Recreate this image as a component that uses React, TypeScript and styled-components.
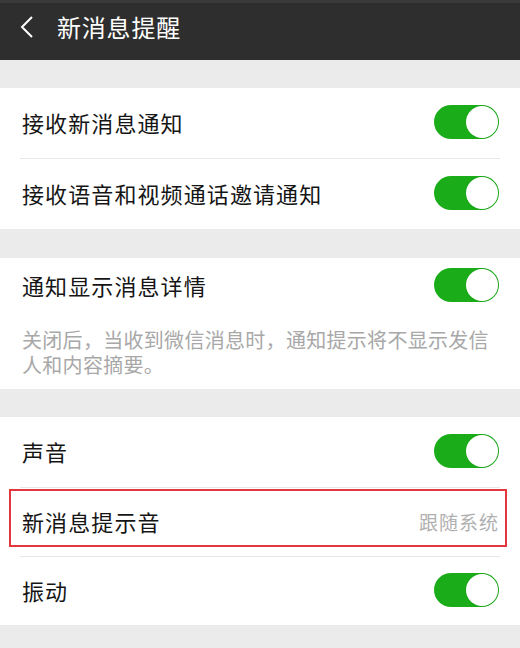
import React from 'react';
import styled, { createGlobalStyle } from 'styled-components';

const GlobalStyle = createGlobalStyle`
    html, body {
        margin: 0;
        padding: 0;
        background: #ebebeb;
    }
    #root {
        min-height: 648px;
    }
`;

const Page = styled.div`
    width: 520px;
    min-height: 648px;
    background: #ebebeb;
    font-family: 'Noto Sans CJK SC', 'Noto Sans', sans-serif;
    overflow: hidden;
`;

const TopBar = styled.header`
    height: 60px;
    box-sizing: border-box;
    border-top: 3px solid #3a3a3a;
    background: #2e2e2e;
    display: flex;
    align-items: center;
    padding: 0 0 9px 20px;
    gap: 23px;
`;

const BackIcon = styled.svg`
    width: 14px;
    height: 22px;
    flex-shrink: 0;
`;

const Title = styled.h1`
    margin: 0;
    font-size: 24px;
    font-weight: 400;
    letter-spacing: 0.8px;
    color: #ffffff;
    line-height: 1;
`;

const Group = styled.section<{ gap: number }>`
    margin-top: ${(p) => p.gap}px;
    background: #ffffff;
`;

const Row = styled.div<{ height?: number; highlighted?: boolean }>`
    position: relative;
    box-sizing: border-box;
    height: ${(p) => p.height ?? 70}px;
    display: flex;
    align-items: center;
    justify-content: space-between;
    padding: 0 22px 2px;

    ${(p) =>
        p.highlighted &&
        `
        &::after {
            content: '';
            position: absolute;
            left: 9px;
            right: 13px;
            top: 1px;
            bottom: 9px;
            border: 2px solid #e2373d;
            pointer-events: none;
        }
    `}
`;

const Label = styled.span`
    font-size: 22px;
    letter-spacing: 1.1px;
    color: #151515;
`;

const Value = styled.span`
    font-size: 19px;
    letter-spacing: 1px;
    color: #b0b0b0;
    margin-right: -1px;
`;

const Divider = styled.div`
    height: 1px;
    margin: 0 20px;
    background: #e8e8e8;
`;

const Note = styled.p`
    margin: 0;
    padding: 13px 28px 12px 22px;
    font-size: 20px;
    letter-spacing: 0.3px;
    line-height: 25px;
    color: #a8a8a8;
`;

const Track = styled.span<{ on: boolean }>`
    position: relative;
    width: 65px;
    height: 34px;
    box-sizing: border-box;
    border-radius: 17px;
    background: ${(p) => (p.on ? '#1aad19' : '#e5e5e5')};
    display: flex;
    align-items: center;
    justify-content: ${(p) => (p.on ? 'flex-end' : 'flex-start')};
    padding: 0 1px;
    margin-right: -1px;
    flex-shrink: 0;
`;

const Knob = styled.span`
    width: 32px;
    height: 32px;
    border-radius: 50%;
    background: #ffffff;
    box-shadow: 0 0 0 1px rgba(0, 0, 0, 0.04);
`;

const Switch: React.FC<{ on?: boolean }> = ({ on = true }) => (
    <Track on={on}>
        <Knob />
    </Track>
);

const App: React.FC = () => {
    return (
        <Page>
            <GlobalStyle />
            <TopBar>
                <BackIcon viewBox="0 0 14 22">
                    <path d="M12 1 L2 11 L12 21" fill="none" stroke="#ffffff" strokeWidth="2" />
                </BackIcon>
                <Title>新消息提醒</Title>
            </TopBar>

            {/* 消息通知 */}
            <Group gap={28}>
                <Row>
                    <Label>接收新消息通知</Label>
                    <Switch />
                </Row>
                <Divider />
                <Row>
                    <Label>接收语音和视频通话邀请通知</Label>
                    <Switch />
                </Row>
            </Group>

            {/* 详情 */}
            <Group gap={29}>
                <Row height={56}>
                    <Label>通知显示消息详情</Label>
                    <Switch />
                </Row>
                <Note>关闭后，当收到微信消息时，通知提示将不显示发信人和内容摘要。</Note>
            </Group>

            {/* 声音 / 振动 */}
            <Group gap={28}>
                <Row>
                    <Label>声音</Label>
                    <Switch />
                </Row>
                <Divider />
                <Row height={68} highlighted>
                    <Label>新消息提示音</Label>
                    <Value>跟随系统</Value>
                </Row>
                <Divider />
                <Row height={68}>
                    <Label>振动</Label>
                    <Switch />
                </Row>
            </Group>
        </Page>
    );
};

export default App;
